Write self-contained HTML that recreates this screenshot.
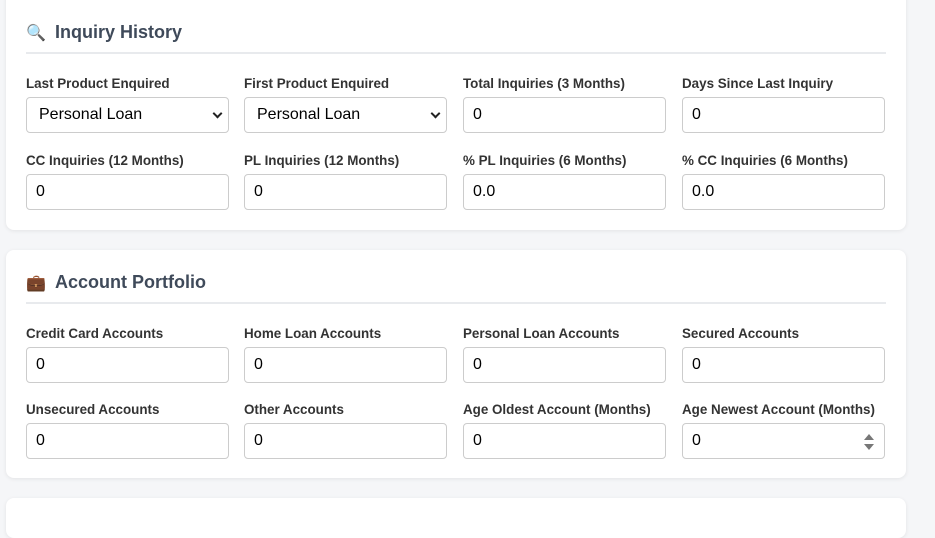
<!DOCTYPE html>
<html><head><style>
body{margin:0;background:#f5f6f8;font-family:"Liberation Sans",sans-serif;width:935px;height:506px;overflow:hidden;position:relative}
.card{position:absolute;left:6px;width:900px;background:#fff;border-radius:8px;box-shadow:0 1px 4px rgba(0,0,0,.08)}
.h{position:absolute;left:20px;top:0;font-size:18px;font-weight:bold;color:#3f4a5a;display:flex;align-items:center}
.h span.i{width:20px;margin-right:9px;font-size:16px}
.line{position:absolute;left:20px;right:20px;height:2px;background:#e8eaed}
.f{position:absolute;width:203px}
.f label{display:block;font-size:13.4px;font-weight:600;color:#333;height:14px;white-space:nowrap}
.box{position:absolute;top:21px;left:0;border:1px solid #ccc;border-radius:4px;background:#fff;font-size:16px;color:#000;line-height:34px;padding-left:9px;box-sizing:border-box;width:203px;height:36px}
.sel{padding-left:12px}
.sel:after{content:"";position:absolute;right:7px;top:12px;width:5px;height:5px;border-right:2px solid #222;border-bottom:2px solid #222;transform:rotate(45deg)}
</style></head><body>
<div class="card" style="top:-10px;height:240px">
 <div class="h" style="top:32px"><span class="i">🔍</span>Inquiry History</div>
 <div class="line" style="top:62px"></div>
 <div class="f" style="left:20px;top:86px"><label>Last Product Enquired</label><div class="box sel">Personal Loan</div></div>
 <div class="f" style="left:238px;top:86px"><label>First Product Enquired</label><div class="box sel">Personal Loan</div></div>
 <div class="f" style="left:457px;top:86px"><label>Total Inquiries (3 Months)</label><div class="box">0</div></div>
 <div class="f" style="left:676px;top:86px"><label>Days Since Last Inquiry</label><div class="box">0</div></div>
 <div class="f" style="left:20px;top:163px"><label>CC Inquiries (12 Months)</label><div class="box">0</div></div>
 <div class="f" style="left:238px;top:163px"><label>PL Inquiries (12 Months)</label><div class="box">0</div></div>
 <div class="f" style="left:457px;top:163px"><label>% PL Inquiries (6 Months)</label><div class="box">0.0</div></div>
 <div class="f" style="left:676px;top:163px"><label>% CC Inquiries (6 Months)</label><div class="box">0.0</div></div>
</div>
<div class="card" style="top:250px;height:228px">
 <div class="h" style="top:22px"><span class="i">💼</span>Account Portfolio</div>
 <div class="line" style="top:52px"></div>
 <div class="f" style="left:20px;top:76px"><label>Credit Card Accounts</label><div class="box">0</div></div>
 <div class="f" style="left:238px;top:76px"><label>Home Loan Accounts</label><div class="box">0</div></div>
 <div class="f" style="left:457px;top:76px"><label>Personal Loan Accounts</label><div class="box">0</div></div>
 <div class="f" style="left:676px;top:76px"><label>Secured Accounts</label><div class="box">0</div></div>
 <div class="f" style="left:20px;top:152px"><label>Unsecured Accounts</label><div class="box">0</div></div>
 <div class="f" style="left:238px;top:152px"><label>Other Accounts</label><div class="box">0</div></div>
 <div class="f" style="left:457px;top:152px"><label>Age Oldest Account (Months)</label><div class="box">0</div></div>
 <div class="f" style="left:676px;top:152px"><label>Age Newest Account (Months)</label><div class="box">0<svg style="position:absolute;right:10px;top:10px" width="10" height="16"><path d="M5 0L10 6H0Z M0 10H10L5 16Z" fill="#777"/></svg></div></div>
</div>
<div class="card" style="top:498px;height:40px"></div>
</body></html>
